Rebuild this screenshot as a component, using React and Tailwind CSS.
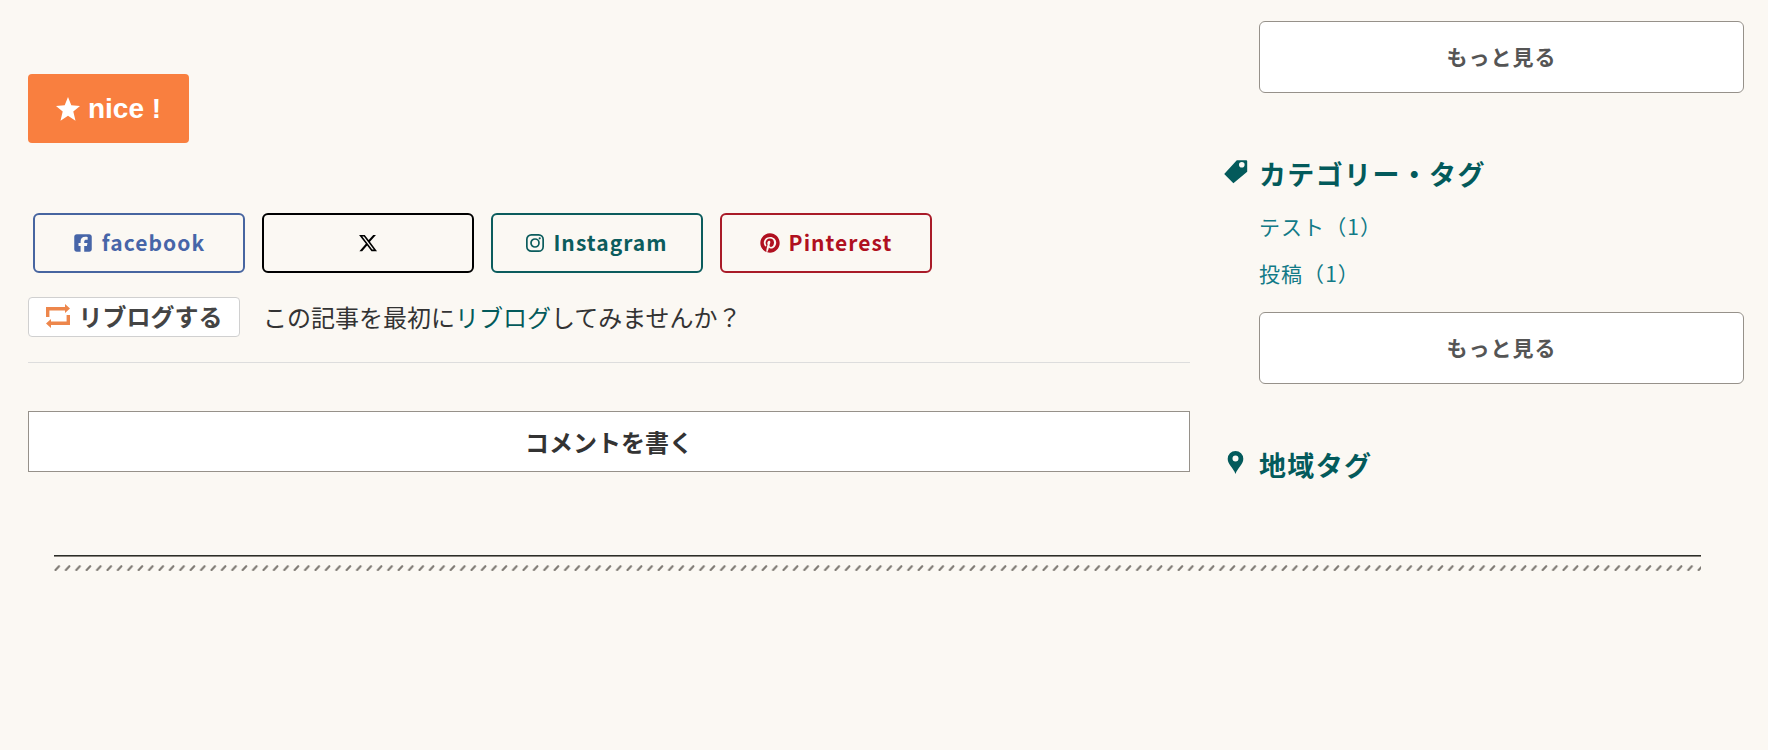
import { useId } from "react";
import { FaSquareFacebook, FaXTwitter, FaPinterest } from "react-icons/fa6";

function StarIcon() {
  return (
    <svg viewBox="0 0 24 24" className="size-6 shrink-0" fill="currentColor" aria-hidden="true">
      <path d="M12 0l3.3 8.3 8.7.6-6.7 5.7 2.2 9.1L12 18.7l-7.5 5 2.2-9.1L0 8.9l8.700-.6z" />
    </svg>
  );
}

function InstagramIcon() {
  return (
    <svg viewBox="0 0 18 18" className="size-[18px] shrink-0" fill="none" stroke="currentColor" strokeWidth="1.7" aria-hidden="true">
      <rect x="0.85" y="0.85" width="16.3" height="16.3" rx="4.5" />
      <circle cx="9" cy="9" r="4" />
      <circle cx="13.7" cy="4.3" r="1.1" fill="currentColor" stroke="none" />
    </svg>
  );
}

function ReblogIcon() {
  return (
    <svg viewBox="0 0 24 24" className="size-6 shrink-0 text-[#ed864b]" fill="currentColor" aria-hidden="true">
      <path d="M0 13V3h19V0l5 4.600L19 9V6.400H3.400V13z" />
      <path d="M24 11v10H5v3l-5-4.600L5 15v2.600h15.600V11z" />
    </svg>
  );
}

function TagIcon() {
  return (
    <svg viewBox="0 0 24 24" className="size-6" fill="currentColor" aria-hidden="true">
      <path fillRule="evenodd" d="M12.800.3h9.400a1 1 0 0 1 1 1v10.400L9.400 23.200.2 14zM17.800 2a2.800 2.800 0 1 0 0 5.600 2.800 2.800 0 0 0 0-5.600z" />
    </svg>
  );
}

function PinIcon() {
  return (
    <svg viewBox="0 0 24 24" className="size-6" fill="currentColor" aria-hidden="true">
      <path fillRule="evenodd" d="M11.500 0a7.800 7.800 0 0 0-7.800 7.900c0 5.500 5.800 9 7.800 15 2-6 7.800-9.500 7.800-15A7.800 7.800 0 0 0 11.500 0zm0 4.500a3 3 0 1 1 0 6 3 3 0 0 1 0-6z" />
    </svg>
  );
}

function ShareLink({ label, className, children }) {
  return (
    <a
      href="#share"
      aria-label={label}
      className={`flex h-[60px] w-[212px] items-center justify-center gap-[9px] rounded-md border-2 text-[21px] font-bold tracking-wider ${className}`}
    >
      {children}
    </a>
  );
}

function MoreButton() {
  return (
    <button type="button" className="h-[72px] w-full rounded-md border border-[#96918a] bg-white text-[21px] font-bold tracking-wider text-[#555]">
      もっと見る
    </button>
  );
}

function SectionTitle({ icon, children }) {
  return (
    <h2 className="flex items-center pl-1 text-[27px] leading-10 font-bold tracking-wider text-[#035a5b]">
      <span className="w-[35px] shrink-0 pb-1">{icon}</span>
      {children}
    </h2>
  );
}

function FooterRule() {
  const id = useId();
  return (
    <div className="mt-[70px] pr-[67px] pl-[54px]" role="separator">
      <div className="h-0.5 border-t border-[#2b2d28] bg-[#87827b]" />
      <svg className="mt-2 block h-1.5 w-full" aria-hidden="true">
        <defs>
          <pattern id={id} width="10.4" height="6" patternUnits="userSpaceOnUse">
            <path d="M1.500 5L5 1.200" stroke="#807b75" strokeWidth="2.100" strokeLinecap="round" />
          </pattern>
        </defs>
        <rect width="100%" height="6" fill={`url(#${id})`} />
      </svg>
    </div>
  );
}

export default function App() {
  return (
    <div className="min-h-screen bg-[#fbf8f3] font-['Noto_Sans_CJK_JP',sans-serif] text-[#333]">
      <div className="flex gap-[30px] pr-6 pl-7">
        <main className="min-w-0 flex-1 pt-[74px]">
          <button type="button" className="flex h-[69px] w-[161px] items-center justify-center gap-2 rounded-sm bg-[#f97f3f] font-['Liberation_Sans',sans-serif] text-[28px] font-bold text-white">
            <StarIcon />
            nice !
          </button>

          <nav aria-label="シェア" className="mt-[70px] flex flex-wrap gap-[17px] pl-[5px]">
            <ShareLink className="border-[#4765a0] text-[#4765a8]">
              <FaSquareFacebook className="size-5" />
              facebook
            </ShareLink>
            <ShareLink label="X" className="border-black text-black">
              <FaXTwitter className="size-5" />
            </ShareLink>
            <ShareLink className="border-[#0b5c5d] text-[#0b5c5d]">
              <InstagramIcon />
              Instagram
            </ShareLink>
            <ShareLink className="border-[#a91b28] text-[#b01020]">
              <FaPinterest className="size-5" />
              Pinterest
            </ShareLink>
          </nav>

          <div className="mt-6 flex items-center gap-[23px] border-b border-[#ddd] pb-[25px]">
            <button type="button" className="flex h-10 w-[212px] items-center justify-center gap-[9px] rounded-sm border border-[#d0d0d0] bg-white pb-0.5 text-2xl font-bold text-[#444]">
              <ReblogIcon />
              リブログする
            </button>
            <p className="text-2xl">
              この記事を最初に
              <a href="#reblog" className="text-[#035a5b]">リブログ</a>
              してみませんか？
            </p>
          </div>

          <button type="button" className="mt-12 h-[61px] w-full border border-[#96918a] bg-white text-2xl font-bold">
            コメントを書く
          </button>
        </main>

        <aside className="w-[524px] shrink-0 pt-[21px]">
          <div className="pl-[39px]">
            <MoreButton />
          </div>
          <section className="mt-[61px]">
            <SectionTitle icon={<TagIcon />}>カテゴリー・タグ</SectionTitle>
            <div className="pl-[39px]">
              <ul className="mt-[9px] mb-[15px] text-[21px] leading-[47px] tracking-wider text-[#127a87]">
                <li><a href="#test">テスト（1）</a></li>
                <li><a href="#post">投稿（1）</a></li>
              </ul>
              <MoreButton />
            </div>
          </section>
          <section className="mt-[61px]">
            <SectionTitle icon={<PinIcon />}>地域タグ</SectionTitle>
          </section>
        </aside>
      </div>
      <FooterRule />
    </div>
  );
}
